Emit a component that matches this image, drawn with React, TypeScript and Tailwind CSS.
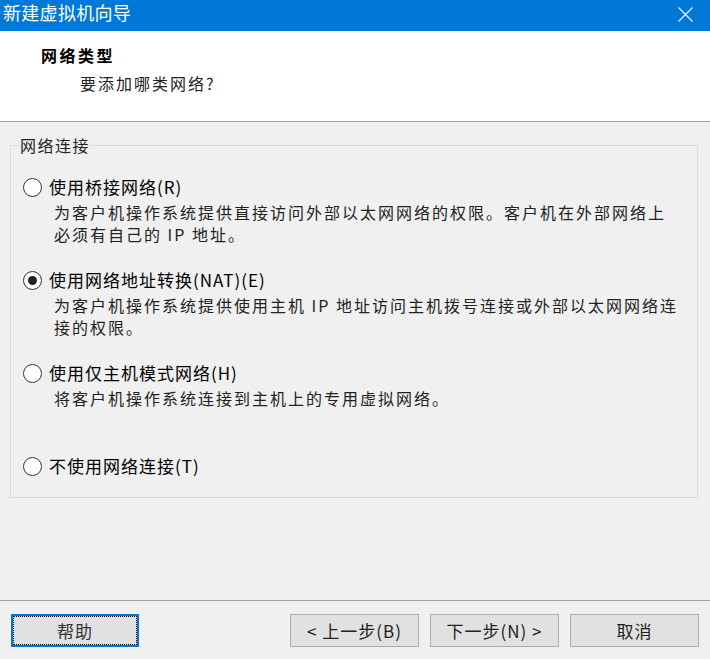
import type { ReactNode } from "react"

const cjk = "font-['Noto_Sans_CJK_SC','Noto_Sans',sans-serif]"

type Opt = {
    label: string
    lines: string[]
    checked?: boolean
}

const options: Opt[] = [
    {
        label: "使用桥接网络(R)",
        lines: [
            "为客户机操作系统提供直接访问外部以太网网络的权限。客户机在外部网络上",
            "必须有自己的 IP 地址。"
        ]
    },
    {
        label: "使用网络地址转换(NAT)(E)",
        checked: true,
        lines: [
            "为客户机操作系统提供使用主机 IP 地址访问主机拨号连接或外部以太网网络连",
            "接的权限。"
        ]
    },
    {
        label: "使用仅主机模式网络(H)",
        lines: ["将客户机操作系统连接到主机上的专用虚拟网络。"]
    },
    { label: "不使用网络连接(T)", lines: [] }
]

const Radio = ({ checked }: { checked?: boolean }) => (
    <span className="w-[19px] h-[19px] rounded-full border border-[#333] bg-white flex items-center justify-center shrink-0">
        {checked && <span className="w-[9px] h-[9px] rounded-full bg-[#222]" />}
    </span>
)

const Option = ({ opt, last }: { opt: Opt; last?: boolean }) => (
    <div className={last ? "" : "h-[93px]"}>
        <div className="flex items-center gap-[7px] h-[22px]">
            <Radio checked={opt.checked} />
            <span className="text-[17px] leading-[22px] tracking-[1px] text-black">{opt.label}</span>
        </div>
        {opt.lines.length > 0 && (
            <div className="mt-[3px] ml-[31px] text-[16px] leading-[22px] tracking-[2px] text-[#222] whitespace-nowrap">
                {opt.lines.map((l, i) => (
                    <div key={i}>{l}</div>
                ))}
            </div>
        )}
    </div>
)

const Btn = ({ children, focus, w = "w-[129px]" }: { children: ReactNode; focus?: boolean; w?: string }) =>
    focus ? (
        <button className={`${w} h-[33px] border-2 border-[#0078d7] bg-[#e1e1e1] p-0`}>
            <div className="h-full border border-dotted border-black flex items-center justify-center text-[17px] tracking-[1px] text-[#333]">
                {children}
            </div>
        </button>
    ) : (
        <button className={`${w} h-[33px] border border-[#adadad] bg-[#e1e1e1] flex items-center justify-center text-[17px] tracking-[1px] text-[#222]`}>
            {children}
        </button>
    )

export default function App() {
    return (
        <div className={`w-[710px] h-[659px] flex flex-col bg-[#f0f0f0] ${cjk} overflow-hidden`}>
            {/* title bar */}
            <div className="h-[31px] bg-[#0078d7] flex items-start justify-between pl-[3px] pr-[17px] shrink-0">
                <span className="text-white text-[18px] leading-[25px] tracking-[0.3px]">新建虚拟机向导</span>
                <svg width="15" height="15" viewBox="0 0 15 15" className="mt-[7px]">
                    <path d="M0.5 0.5 L14.5 14.5 M14.5 0.5 L0.5 14.5" stroke="white" strokeWidth="1.1" />
                </svg>
            </div>

            {/* header */}
            <div className="h-[91px] bg-white border-b border-[#a0a0a0] pt-[13px] shrink-0">
                <div className="pl-[41px] text-[16px] leading-[22px] tracking-[2.5px] font-bold text-black">网络类型</div>
                <div className="pl-[80px] mt-[6px] text-[16px] leading-[22px] tracking-[2px] text-[#222]">要添加哪类网络?</div>
            </div>

            {/* body */}
            <div className="flex-1 pt-[12px] pl-[10px] pr-[12px]">
                <fieldset className="border border-[#dcdcdc] pl-[12px] pt-[20px] pb-[20px]">
                    <legend className="-ml-[3px] text-[16px] leading-[22px] tracking-[1.5px] text-[#222]">网络连接</legend>
                    {options.map((o, i) => (
                        <Option key={i} opt={o} last={i === options.length - 1} />
                    ))}
                </fieldset>
            </div>

            {/* footer */}
            <div className="h-[59px] border-t border-[#a0a0a0] pt-[13px] pl-[11px] pr-[11px] flex items-start justify-between shrink-0">
                <Btn focus w="w-[128px]">帮助</Btn>
                <div className="flex gap-[11px]">
                    <Btn>&lt; 上一步(B)</Btn>
                    <Btn>下一步(N) &gt;</Btn>
                    <Btn>取消</Btn>
                </div>
            </div>
        </div>
    )
}
